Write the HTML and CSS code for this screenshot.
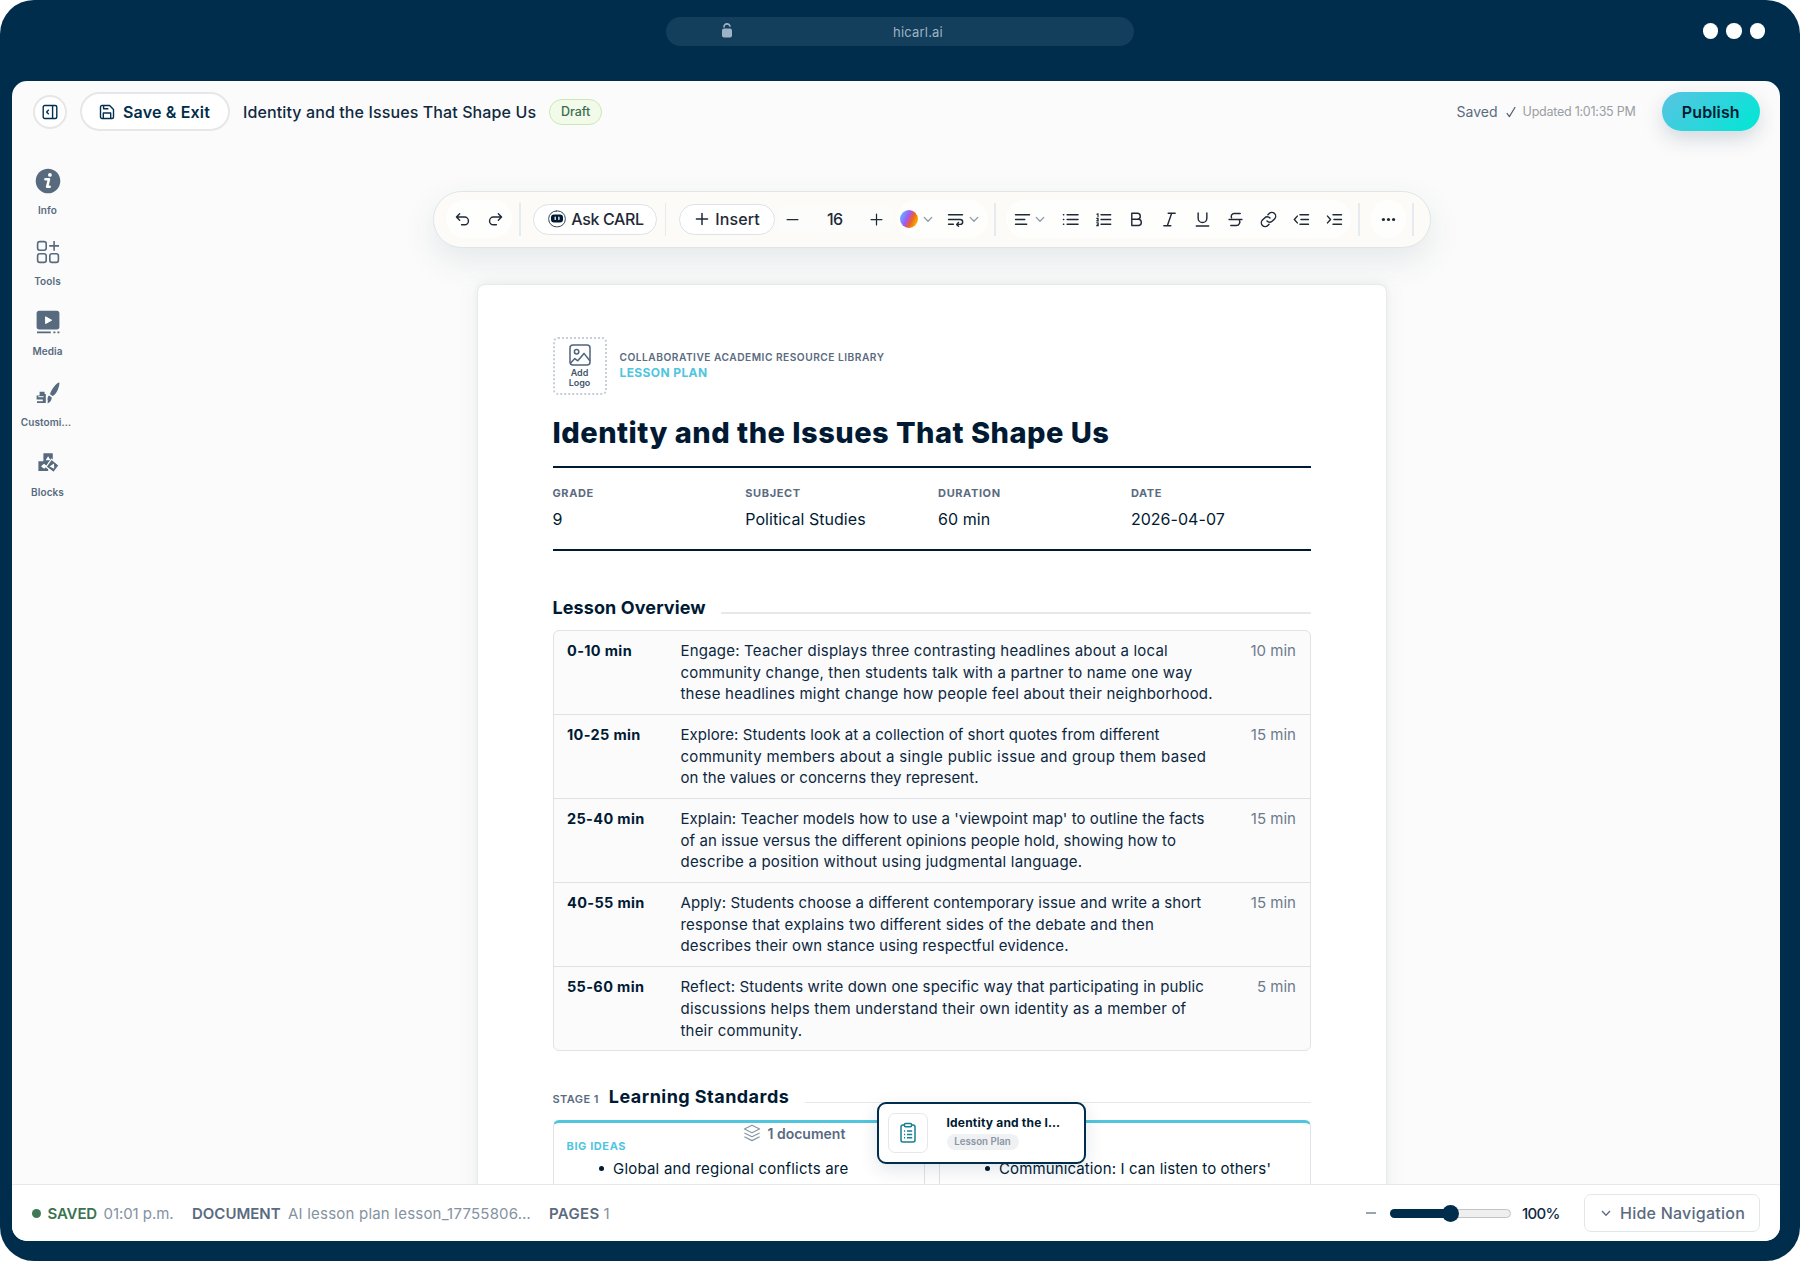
FILE: index.html
```
<!DOCTYPE html>
<html lang="en">
<head>
    <meta charset="UTF-8" />
    <title>Identity and the Issues That Shape Us</title>
    <link rel="stylesheet" href="styles.css">
</head>
<body>
    <div class="browser">
        <header class="chrome">
            <div class="url-bar">
                <svg class="lock" viewBox="0 0 10 15"><path d="M2 4.6V4a3 3 0 0 1 6-.2" fill="none" stroke="currentColor" stroke-width="1.6" /><rect x="0" y="5.4" width="10" height="9" rx="2" fill="currentColor" /></svg>
                <span>hicarl.ai</span>
            </div>
            <div class="dots"><i></i><i></i><i></i></div>
        </header>

        <div class="app">
            <div class="topbar">
                <button class="toggle">
                    <svg width="16" height="16" viewBox="0 0 16 16"><rect x="1.2" y="1.5" width="13.6" height="13" rx="1.5" /><path d="M10.6 1.5v13M6.8 5.8 4.6 8l2.2 2.2" /></svg>
                </button>
                <button class="save">
                    <svg width="16" height="16" viewBox="0 0 16 16"><path d="M1.5 3A1.5 1.5 0 0 1 3 1.5h7.6l3.9 3.9V13a1.5 1.5 0 0 1-1.5 1.5H3A1.5 1.5 0 0 1 1.5 13zM4.3 14.5V9h7.4v5.5M4.6 1.5v3.3h4.8" /></svg>
                    <span>Save &amp; Exit</span>
                </button>
                <span class="doc-name">Identity and the Issues That Shape Us</span>
                <span class="draft">Draft</span>
                <div class="topbar-right">
                    <span class="saved">Saved</span>
                    <svg class="tick" width="10" height="12" viewBox="0 0 10 12"><path d="M.8 7.2 3.4 10.6 9.2 1" /></svg>
                    <span class="updated">Updated 1:01:35 PM</span>
                    <button class="publish">Publish</button>
                </div>
            </div>

            <div class="workspace">
                <nav class="sidebar">
                    <a class="side-item">
                        <svg width="26" height="26" viewBox="0 0 26 26"><circle cx="13" cy="13" r="12.3" fill="currentColor" /><circle cx="14.9" cy="6.9" r="1.9" fill="#fff" /><path d="M10.4 11.2h3.6l-1.9 7.6h2.6" fill="none" stroke="#fff" stroke-width="2.5" stroke-linecap="round" stroke-linejoin="round" /></svg>
                        <span>Info</span>
                    </a>
                    <a class="side-item">
                        <svg width="26" height="26" viewBox="0 0 26 26" fill="none" stroke="currentColor" stroke-width="1.6"><rect x="2.6" y="2.6" width="8.6" height="8.6" rx="2.2" /><rect x="2.6" y="14.8" width="8.6" height="8.6" rx="2.2" /><rect x="14.8" y="14.8" width="8.6" height="8.6" rx="2.2" /><path d="M19.1 2v9.8M14.2 6.9H24" /></svg>
                        <span>Tools</span>
                    </a>
                    <a class="side-item">
                        <svg width="26" height="26" viewBox="0 0 26 26"><rect x="1.6" y="1.8" width="22.8" height="18.6" rx="2.6" fill="currentColor" /><path d="M10.6 7.8v6.8l6-3.4z" fill="#fff" stroke="#fff" stroke-linejoin="round" /><path d="M2 23.4h13.8M18.4 23.4h2M22.4 23.4h2" stroke="currentColor" stroke-width="1.9" /></svg>
                        <span>Media</span>
                    </a>
                    <a class="side-item">
                        <svg width="26" height="26" viewBox="0 0 26 26" fill="currentColor"><path d="M4.6 11.8h5v2.2h1.2v9H2v-1.8h5.8v-1.800H1.600v-4h3zM24.200 2.400c.7 1.600-.9 7.200-3 10.400-1 1.600-2.200 2.600-3.600 3.200L15 14.200c.4-2.600 3-6.600 5-8.800 1.300-1.500 2.800-2.800 4.200-3zM14 15.600l2.800 2c-.2 2.800-1.600 5-4.400 5.800.6-1.200.4-2.200.2-3.400-.2-1.800.2-3.400 1.400-4.400z" /><path d="M3.200 16.700h5.400" stroke="#fbfbfb" stroke-width="1" /></svg>
                        <span class="clipped">Customi…</span>
                    </a>
                    <a class="side-item">
                        <svg width="26" height="26" viewBox="0 0 26 26"><path d="M8.4 3.2h9.400v9.200H8.400zM3.400 11.200h9.800v9.800H3.400z" fill="currentColor" /><path d="M10.600 10.200l2.500-4 2.500 4zM6 16.300l3-2.500 3 2.500-3 2.500z" fill="#fff" /><path d="M16.600 9.200l7.400 6.200-5.400 7.200-7.600-5.800z" fill="currentColor" stroke="#fbfbfb" stroke-width="1.200" /><path d="M14.600 16.600l4.400-3 .2 5.200z" fill="#fff" /></svg>
                        <span>Blocks</span>
                    </a>
                </nav>

                <main class="canvas">
                    <div class="toolbar">
                        <div class="group">
                            <button class="tool"><svg viewBox="0 0 18 18"><path d="M6 3 2.600 6.400 6 9.800M2.800 6.400h8.400a4 4 0 0 1 0 8.200H8" /></svg></button>
                            <button class="tool"><svg viewBox="0 0 18 18"><path d="M12 3l3.400 3.400L12 9.800M15.200 6.400H6.800a4 4 0 0 0 0 8.200H10" /></svg></button>
                        </div>
                        <i class="divider"></i>
                        <button class="pill ask">
                            <svg width="18" height="18" viewBox="0 0 18 18"><rect x=".7" y="1" width="16.600" height="15.800" rx="7.600" fill="#fff" stroke="#34465a" stroke-width="1" /><rect x="3" y="4.600" width="12" height="7.800" rx="3" fill="#001a33" stroke="none" /><path d="M7.200 7.200v2.200M10.900 7.200v2.200" stroke="#fff" stroke-width="1.300" /></svg>
                            <span>Ask CARL</span>
                        </button>
                        <i class="divider"></i>
                        <button class="pill insert">
                            <svg width="14" height="14" viewBox="0 0 14 14"><path d="M7 1.400v11.200M1.400 7h11.200" /></svg>
                            <span>Insert</span>
                        </button>
                        <div class="stepper">
                            <button class="tool"><svg viewBox="0 0 18 18"><path d="M2.500 9h13" /></svg></button>
                            <span>16</span>
                            <button class="tool"><svg viewBox="0 0 18 18"><path d="M2.500 9h13M9 2.500v13" /></svg></button>
                        </div>
                        <div class="group styles">
                            <button class="tool wide"><i class="swatch"></i><svg class="chev" viewBox="0 0 10 10"><path d="M1.200 3.400 5 7.200l3.800-3.800" /></svg></button>
                            <button class="tool wide"><svg viewBox="0 0 18 18"><path d="M1.600 4h14.800M1.600 9h12.400a2.600 2.600 0 0 1 0 5.200h-3M1.600 14h5.200M12.200 12.200l-2 2 2 2" /></svg><svg class="chev" viewBox="0 0 10 10"><path d="M1.200 3.400 5 7.200l3.800-3.800" /></svg></button>
                        </div>
                        <i class="divider"></i>
                        <div class="group format">
                            <button class="tool wide"><svg viewBox="0 0 18 18"><path d="M1.600 4h14.800M1.600 9h9.800M1.600 14h11.800" /></svg><svg class="chev" viewBox="0 0 10 10"><path d="M1.200 3.400 5 7.200l3.800-3.800" /></svg></button>
                            <button class="tool"><svg viewBox="0 0 18 18"><path d="M5.400 4H17M5.400 9H17M5.400 14H17M1.500 4h.4M1.500 9h.4M1.500 14h.4" /></svg></button>
                            <button class="tool"><svg viewBox="0 0 18 18"><path d="M6.400 4h10.200M6.400 9h10.200M6.400 14h10.200" /><path d="M2 3.400l1.200-.6v3.200M1.800 7.800h1.500v1.200l-1.400 1.500h1.700M1.800 12.500h1.600v3H1.800M2.400 14h1" stroke-width="1.200" /></svg></button>
                            <button class="tool"><svg viewBox="0 0 18 18"><path d="M4 2.400h5.800a3.200 3.200 0 0 1 0 6.400H4zM4 8.800h6.800a3.300 3.300 0 0 1 0 6.600H4z" /></svg></button>
                            <button class="tool"><svg viewBox="0 0 18 18"><path d="M7.600 2.400H15M3 15.600h7.400M11.300 2.400 6.700 15.600" /></svg></button>
                            <button class="tool"><svg viewBox="0 0 18 18"><path d="M4.400 2v5.600a4.600 4.600 0 0 0 9.200 0V2M2.400 15.800h13.200" /></svg></button>
                            <button class="tool"><svg viewBox="0 0 18 18"><path d="M14 2.600H7.600a3.200 3.200 0 0 0-2.800 4.600M2.200 9h13.600M12.800 9c1.600 2.600.4 6.400-3 6.400H4" /></svg></button>
                            <button class="tool"><svg viewBox="0 0 18 18"><path d="M7.400 10.600a3.900 3.900 0 0 0 5.700.1l2.300-2.300a3.900 3.900 0 0 0-5.700-5.700L8.400 4M10.600 7.400a3.900 3.900 0 0 0-5.700-.1L2.600 9.600a3.900 3.900 0 0 0 5.700 5.700L9.600 14" /></svg></button>
                            <button class="tool"><svg viewBox="0 0 18 18"><path d="M7.400 4h9M8.400 9h8M7.400 14h9M4.600 5.400 1.400 9l3.200 3.600" /></svg></button>
                            <button class="tool"><svg viewBox="0 0 18 18"><path d="M7.400 4h9M8.400 9h8M7.400 14h9M1.600 5.400 4.800 9l-3.200 3.600" /></svg></button>
                        </div>
                        <i class="divider"></i>
                        <div class="group more">
                            <button class="tool"><svg viewBox="0 0 18 18"><g fill="currentColor" stroke="none"><circle cx="3.600" cy="9" r="1.700" /><circle cx="9" cy="9" r="1.700" /><circle cx="14.400" cy="9" r="1.700" /></g></svg></button>
                        </div>
                        <i class="divider"></i>
                    </div>

                    <article class="page">
                        <div class="brand">
                            <div class="logo-box">
                                <svg width="22" height="22" viewBox="0 0 22 22"><rect x="1" y="1" width="20" height="20" rx="3" /><circle cx="7.600" cy="7.800" r="2.200" /><path d="M1.200 19.600l4.600-5 3 2.200 6.200-7.400 6 7.600" /></svg>
                                <span>Add<br>Logo</span>
                            </div>
                            <div class="brand-text">
                                <div class="org">COLLABORATIVE ACADEMIC RESOURCE LIBRARY</div>
                                <div class="kind">LESSON PLAN</div>
                            </div>
                        </div>
                        <h1>Identity and the Issues That Shape Us</h1>
                        <dl class="meta">
                            <div><dt>GRADE</dt><dd>9</dd></div>
                            <div><dt>SUBJECT</dt><dd>Political Studies</dd></div>
                            <div><dt>DURATION</dt><dd>60 min</dd></div>
                            <div><dt>DATE</dt><dd>2026-04-07</dd></div>
                        </dl>

                        <div class="section-head"><h2>Lesson Overview</h2></div>
                        <div class="schedule">
                            <div class="slot">
                                <b>0-10 min</b>
                                <p>Engage: Teacher displays three contrasting headlines about a local<br>community change, then students talk with a partner to name one way<br>these headlines might change how people feel about their neighborhood.</p>
                                <span>10 min</span>
                            </div>
                            <div class="slot">
                                <b>10-25 min</b>
                                <p><em class="snug">Explore: Students look at a collection of short quotes from different</em><br><em class="loose">community members about a single public issue and group them based</em><br><em class="snug">on the values or concerns they represent.</em></p>
                                <span>15 min</span>
                            </div>
                            <div class="slot">
                                <b>25-40 min</b>
                                <p><em class="snug">Explain: Teacher models how to use a 'viewpoint map' to outline the facts<br>of an issue versus the different opinions people hold, showing how to</em><br>describe a position without using judgmental language.</p>
                                <span>15 min</span>
                            </div>
                            <div class="slot">
                                <b>40-55 min</b>
                                <p><em class="mid">Apply: Students choose a different contemporary issue and write a short</em><br>response that explains two different sides of the debate and then<br><em class="mid">describes their own stance using respectful evidence.</em></p>
                                <span>15 min</span>
                            </div>
                            <div class="slot">
                                <b>55-60 min</b>
                                <p><em class="mid">Reflect: Students write down one specific way that participating in public</em><br>discussions helps them understand their own identity as a member of<br>their community.</p>
                                <span>5 min</span>
                            </div>
                        </div>

                        <div class="section-head standards-head"><span>STAGE 1</span><h2>Learning Standards</h2></div>
                        <div class="standards">
                            <div class="standard">
                                <h3>BIG IDEAS</h3>
                                <ul><li>Global and regional conflicts are<br>powerful forces that shape</li></ul>
                            </div>
                            <div class="standard">
                                <h3></h3>
                                <ul><li class="tight">Communication: I can listen to others'<br>ideas as we share our views</li></ul>
                            </div>
                        </div>
                    </article>

                    <div class="doc-nav">
                        <div class="doc-count">
                            <svg width="18" height="18" viewBox="0 0 18 18"><path d="M9 1.200 16.600 5 9 8.800 1.400 5zM1.400 9 9 12.800 16.600 9M1.400 12.800 9 16.600l7.600-3.800" /></svg>
                            <span>1 document</span>
                        </div>
                        <div class="doc-card">
                            <div class="doc-icon">
                                <svg width="18" height="22" viewBox="0 0 18 22"><rect x="2" y="3" width="14" height="17" rx="2" /><rect x="5.400" y="1.400" width="7.200" height="3.400" rx="1.200" fill="#fff" /><path d="M5 9h1.200M8 9h5.200M5 12.400h1.200M8 12.400h5.200M5 15.800h1.200M8 15.800h5.200" /></svg>
                            </div>
                            <div>
                                <div class="doc-title">Identity and the I…</div>
                                <span class="doc-badge">Lesson Plan</span>
                            </div>
                        </div>
                    </div>
                </main>
            </div>

            <footer class="status">
                <i class="status-dot"></i>
                <b class="ok">SAVED</b><span class="time">01:01 p.m.</span>
                <b class="doc-label">DOCUMENT</b><span class="file">AI lesson plan lesson_17755806…</span>
                <b class="pages">PAGES</b><span>1</span>
                <div class="zoom">
                    <i class="zoom-out"></i>
                    <div class="slider"><i class="fill"></i><i class="thumb"></i></div>
                    <span class="percent">100%</span>
                    <button class="hide-nav">
                        <svg width="10" height="10" viewBox="0 0 10 10"><path d="M1 3l4 4.200L9 3" /></svg>
                        <span>Hide Navigation</span>
                    </button>
                </div>
            </footer>
        </div>
    </div>
</body>
</html>
```
FILE: styles.css
```
* {
    box-sizing: border-box;
}

body {
    margin: 0;
    background: #fff;
    font-family: Inter, "Open Sans", sans-serif;
    color: #001a33;
}

button {
    font: inherit;
    color: inherit;
    background: none;
    border: none;
    padding: 0;
    cursor: pointer;
}

svg {
    display: block;
    flex: none;
}

h1, h2, h3, p, ul, dl, dd {
    margin: 0;
}

.browser {
    height: 1261px;
    padding: 0 20px 20px 12px;
    background: #002d4b;
    border-radius: 34px;
    display: flex;
    flex-direction: column;
}

/* browser chrome */
.chrome {
    height: 81px;
    flex: none;
    display: grid;
    grid-template-columns: 1fr 468px 1fr;
    align-items: start;
    padding: 17px 15px 0 23px;
}

.url-bar {
    grid-column: 2;
    height: 29px;
    border-radius: 15px;
    background: #133f5c;
    color: #9db4c6;
    font-size: 13px;
    letter-spacing: 0.2px;
    display: flex;
    align-items: center;
}

.lock {
    width: 10px;
    height: 15px;
    margin: 0 161px 2px 56px;
}

.dots {
    display: flex;
    justify-content: flex-end;
    gap: 8px;
    padding-top: 6px;
}

.dots i {
    width: 15.5px;
    height: 15.5px;
    border-radius: 50%;
    background: #fff;
}

.app {
    flex: 1;
    min-height: 0;
    background: #fbfbfb;
    border-radius: 15px;
    overflow: hidden;
    display: flex;
    flex-direction: column;
}

/* top bar */
.topbar {
    height: 61px;
    flex: none;
    display: flex;
    align-items: center;
    padding: 0 20px 0 20.5px;
}

.toggle svg, .save svg, .tick {
    fill: none;
    stroke: #00304f;
    stroke-width: 1.4;
    stroke-linejoin: round;
}

.toggle {
    width: 34px;
    height: 34px;
    border: 2px solid #e6e7e8;
    border-radius: 50%;
    background: #fff;
    display: grid;
    place-items: center;
}

.save {
    width: 149.5px;
    height: 39px;
    margin-left: 13.5px;
    padding-left: 17px;
    border: 2px solid #e6e7e8;
    border-radius: 20px;
    background: #fff;
    color: #002d4b;
    font-weight: 600;
    letter-spacing: 0.17px;
    display: flex;
    align-items: center;
    gap: 8px;
}

.doc-name {
    margin-left: 13.5px;
    font-size: 16px;
    font-weight: 500;
    letter-spacing: 0.11px;
    color: #10293f;
}

.draft {
    width: 53px;
    height: 26px;
    margin-left: 13px;
    border: 1px solid #cbe8b2;
    border-radius: 13px;
    background: #f2fbe9;
    color: #3c6e50;
    font-size: 12.5px;
    font-weight: 500;
    line-height: 24px;
    text-align: center;
}

.topbar-right {
    margin-left: auto;
    display: flex;
    align-items: center;
}

.saved {
    font-size: 14px;
    color: #5a6b7f;
}

.tick {
    margin: 0 7px 0 8px;
    stroke: #4f6073;
    stroke-width: 1.2;
}

.updated {
    font-size: 12.5px;
    letter-spacing: -0.25px;
    color: #9a9ea4;
}

.publish {
    width: 98.5px;
    height: 39px;
    margin-left: 26px;
    border-radius: 20px;
    background: linear-gradient(135deg, #56c4e2 5%, #0be3d7 85%);
    box-shadow: 0 8px 20px rgba(0, 45, 75, 0.16);
    font-weight: 600;
    letter-spacing: 0.13px;
    color: #001a33;
}

.workspace {
    flex: 1;
    min-height: 0;
    display: flex;
}

/* sidebar */
.sidebar {
    width: 71px;
    flex: none;
    padding-top: 26px;
}

.side-item {
    height: 70.5px;
    display: flex;
    flex-direction: column;
    align-items: center;
    color: #576a7e;
}

.side-item span {
    margin-top: 8px;
    font-size: 10px;
    font-weight: 600;
    line-height: 16px;
    letter-spacing: 0.1px;
}

.side-item .clipped {
    margin-right: 3px;
}

.canvas {
    flex: 1;
    position: relative;
    display: flex;
    flex-direction: column;
    align-items: center;
    padding-top: 48.5px;
    overflow: hidden;
}

/* toolbar */
.toolbar {
    position: relative;
    z-index: 1;
    width: 998px;
    height: 57px;
    flex: none;
    padding-left: 12px;
    border: 1px solid #dfe5e9;
    border-radius: 29px;
    background: #fdfbf7;
    box-shadow: 0 12px 32px rgba(30, 70, 80, 0.1);
    display: flex;
    align-items: center;
    color: #1f2937;
}

.toolbar svg {
    fill: none;
    stroke: currentColor;
    stroke-width: 1.5;
    stroke-linecap: round;
    stroke-linejoin: round;
}

.group {
    height: 38px;
    border-radius: 19px;
    background: #fefefc;
    display: flex;
}

.tool {
    width: 33.15px;
    height: 38px;
    display: flex;
    align-items: center;
    justify-content: center;
}

.tool svg {
    width: 17px;
    height: 17px;
}

.tool .chev {
    width: 10px;
    height: 10px;
    stroke: #8b9bad;
    stroke-width: 1.3;
}

.divider {
    width: 1.5px;
    height: 33px;
    flex: none;
    margin: 0 12.5px 0 7.5px;
    background: #e6eaf1;
}

.pill {
    height: 31px;
    border: 1px solid #dbe3e9;
    border-radius: 16px;
    background: #fff;
    font-size: 16px;
    font-weight: 500;
    display: flex;
    align-items: center;
}

.ask {
    width: 124px;
    padding-left: 14px;
    gap: 5px;
    letter-spacing: -0.35px;
}

.insert {
    width: 96px;
    padding-left: 15px;
    gap: 6.5px;
    letter-spacing: 0.1px;
}

.stepper {
    height: 28px;
    width: 116px;
    margin: 0 4px 0 2px;
    border-radius: 10px;
    background: #fcfcfa;
    display: flex;
    align-items: center;
    justify-content: space-between;
    font-weight: 500;
    letter-spacing: -0.6px;
}

.stepper .tool {
    width: 32px;
}

.stepper .tool svg {
    width: 15px;
    height: 15px;
}

.styles {
    width: 91px;
    gap: 6px;
}

.tool.wide {
    width: 40px;
    gap: 4.5px;
}

.swatch {
    width: 18px;
    height: 18px;
    margin-left: -1px;
    border-radius: 50%;
    background: linear-gradient(115deg, #5db4ff 12%, #a259f7 42%, #ee6322 62%, #f5b800 88%);
}

.styles + .divider {
    margin: 0 10px 0 6.5px;
}

.format {
    width: 345.5px;
}

.format .wide {
    width: 48px;
}

.format + .divider {
    margin: 0 11px 0 7px;
}

.more {
    width: 35px;
    justify-content: center;
}

.more + .divider {
    margin: 0 0 0 6.5px;
}

/* document */
.page {
    width: 910px;
    flex: none;
    height: 1000px;
    margin-top: 36px;
    padding: 52.5px 75px 0;
    border: 1px solid #e7ebec;
    border-radius: 8px;
    background: #fff;
    box-shadow: 0 0 6px rgba(30, 60, 70, 0.06), 0 0 24px rgba(30, 60, 70, 0.05);
}

.brand {
    height: 58px;
    display: flex;
    align-items: center;
    gap: 13px;
}

.brand-text {
    padding-bottom: 1.5px;
}

.logo-box {
    width: 54px;
    height: 58px;
    border: 2px dotted #c6d0da;
    border-radius: 5px;
    padding-top: 5px;
    display: flex;
    flex-direction: column;
    align-items: center;
    color: #44566a;
    font-size: 9px;
    font-weight: 600;
    line-height: 10px;
    text-align: center;
}

.logo-box svg {
    fill: none;
    stroke: #50647a;
    stroke-width: 1.5;
    stroke-linejoin: round;
    margin-bottom: 2px;
}

.org {
    font-size: 10.2px;
    font-weight: 600;
    line-height: 15px;
    letter-spacing: 0.49px;
    color: #5a6b7f;
}

.kind {
    font-size: 12px;
    font-weight: 700;
    line-height: 16px;
    letter-spacing: 0.39px;
    color: #50c5de;
}

h1 {
    margin-top: 18px;
    font-size: 29px;
    font-weight: 800;
    line-height: 40px;
    letter-spacing: 0.48px;
    white-space: nowrap;
}

.meta {
    margin-top: 12.5px;
    padding: 17px 0 18px;
    border-top: 2px solid #001a33;
    border-bottom: 2px solid #001a33;
    display: grid;
    grid-template-columns: repeat(4, 192.8px);
    height: 85.5px;
}

dt {
    font-size: 11px;
    font-weight: 700;
    line-height: 16px;
    letter-spacing: 0.6px;
    color: #5a6b7f;
}

dd {
    margin-top: 6.5px;
    font-size: 16px;
    line-height: 24px;
    letter-spacing: 0.04px;
}

.section-head {
    margin: 43.5px 0 9.5px;
    height: 26px;
    display: flex;
    align-items: center;
}

.section-head::after {
    content: "";
    flex: 1;
    height: 1.5px;
    margin: 11px 0 0 15.5px;
    background: #e7e8ea;
}

h2 {
    font-size: 18px;
    font-weight: 700;
    line-height: 26px;
    letter-spacing: 0.1px;
}

.schedule {
    border: 1px solid #dfe3e5;
    border-radius: 6px;
    background: #fbfbfb;
}

.slot {
    display: grid;
    grid-template-columns: 113.5px 1fr auto;
    padding: 8.9px 13.5px 8.9px 13.5px;
    font-size: 15px;
    line-height: 21.75px;
}

.slot + .slot {
    border-top: 1px solid #dfe1e4;
}

.slot b {
    font-size: 14.5px;
    font-weight: 700;
    letter-spacing: 0.35px;
}

.slot p {
    letter-spacing: 0.2px;
    white-space: nowrap;
    color: #0c2740;
}

.slot em {
    font-style: normal;
}

.slot .snug {
    letter-spacing: 0.06px;
}

.slot .mid {
    letter-spacing: 0.1px;
}

.slot .loose {
    letter-spacing: 0.3px;
}

.slot span {
    color: #6b7a8c;
    letter-spacing: 0.02px;
}

.standards-head {
    margin: 33px 0 9.5px;
}

.standards-head span {
    margin: 4px 10px 0 0;
    font-size: 11px;
    font-weight: 600;
    letter-spacing: 0.42px;
    color: #5a6b7f;
}

.standards-head h2 {
    letter-spacing: 0.46px;
}

.standards {
    display: grid;
    grid-template-columns: 1fr 1fr;
    gap: 14px;
}

.standard {
    height: 140px;
    border: 1px solid #dfe3e7;
    border-top: 3.5px solid #50c5de;
    border-radius: 6px;
    padding: 15px 13px;
}

h3 {
    height: 16px;
    font-size: 11px;
    font-weight: 700;
    line-height: 16px;
    letter-spacing: 0.6px;
    color: #50c5de;
}

.standard ul {
    margin-top: 3.5px;
    padding: 0;
    list-style: none;
    font-size: 15px;
    line-height: 23px;
    letter-spacing: 0.21px;
    white-space: nowrap;
}

.standard li {
    display: flex;
    padding-left: 32px;
}

.standard li::before {
    content: "";
    width: 5.5px;
    height: 5.5px;
    margin: 8.5px 9px 0 0;
    border-radius: 50%;
    background: #001a33;
}

.standard .tight {
    letter-spacing: 0.12px;
}

/* floating document switcher */
.doc-nav {
    position: absolute;
    z-index: 2;
    left: 660px;
    top: 960px;
    display: flex;
    align-items: center;
}

.doc-count {
    width: 133.5px;
    display: flex;
    align-items: center;
    gap: 6.5px;
    font-size: 14px;
    font-weight: 600;
    color: #5a6b7f;
}

.doc-count svg {
    fill: none;
    stroke: #8795a5;
    stroke-width: 1.2;
    stroke-linejoin: round;
}

.doc-card {
    width: 209px;
    height: 62px;
    padding-left: 9px;
    border: 2.5px solid #002d4b;
    border-radius: 9px;
    background: #fff;
    box-shadow: 0 6px 18px rgba(0, 45, 75, 0.12);
    display: flex;
    align-items: center;
    gap: 19px;
}

.doc-icon {
    width: 40px;
    height: 40px;
    border: 1px solid #e5e7e9;
    border-radius: 7px;
    display: grid;
    place-items: center;
}

.doc-icon svg {
    fill: none;
    stroke: #158090;
    stroke-width: 1.5;
}

.doc-title {
    font-size: 12px;
    font-weight: 700;
    line-height: 18px;
    letter-spacing: 0.2px;
}

.doc-badge {
    display: block;
    width: 72px;
    height: 16px;
    margin-top: 2px;
    border-radius: 8px;
    background: #f0f1f2;
    color: #8a96a5;
    font-size: 9.7px;
    font-weight: 600;
    line-height: 16px;
    text-align: center;
}

.doc-card > div:last-child {
    padding-bottom: 2px;
}

/* status bar */
.status {
    height: 57px;
    flex: none;
    padding: 0 20px;
    border-top: 1.5px solid #e6e8ea;
    background: #fff;
    display: flex;
    align-items: center;
    font-size: 15px;
    color: #8592a2;
}

.status b {
    font-weight: 600;
    color: #5a6b7f;
}

.status-dot {
    width: 9px;
    height: 9px;
    margin-right: 6.5px;
    border-radius: 50%;
    background: #3f7a55;
}

.status .ok {
    width: 56px;
    letter-spacing: -0.14px;
    color: #3a7350;
}

.time {
    width: 88.5px;
    letter-spacing: -0.06px;
}

.status .doc-label {
    width: 96px;
}

.file {
    width: 261px;
    letter-spacing: 0.21px;
}

.status .pages {
    width: 54.5px;
    letter-spacing: 0.33px;
}

.zoom {
    margin-left: auto;
    display: flex;
    align-items: center;
}

.zoom-out {
    width: 10px;
    height: 1.5px;
    margin-right: 14px;
    background: #9aa5b1;
}

.slider {
    position: relative;
    width: 121px;
    height: 9px;
    border: 1px solid #c2c3c5;
    border-radius: 5px;
    background: #efeff0;
}

.fill {
    position: absolute;
    inset: -1px 50% -1px -1px;
    border-radius: 5px;
    background: #002d4b;
}

.thumb {
    position: absolute;
    left: 51px;
    top: -5px;
    width: 17px;
    height: 17px;
    border-radius: 50%;
    background: #002d4b;
}

.percent {
    width: 62px;
    margin-left: 11px;
    font-weight: 500;
    letter-spacing: -0.7px;
    color: #10293f;
}

.hide-nav {
    width: 176px;
    height: 38px;
    padding-left: 16px;
    border: 1px solid #e3e6e9;
    border-radius: 7px;
    display: flex;
    align-items: center;
    gap: 9px;
    font-size: 16px;
    font-weight: 500;
    letter-spacing: 0.24px;
    color: #5a6b7f;
}

.hide-nav svg {
    fill: none;
    stroke: #5a6b7f;
    stroke-width: 1.3;
}
```
